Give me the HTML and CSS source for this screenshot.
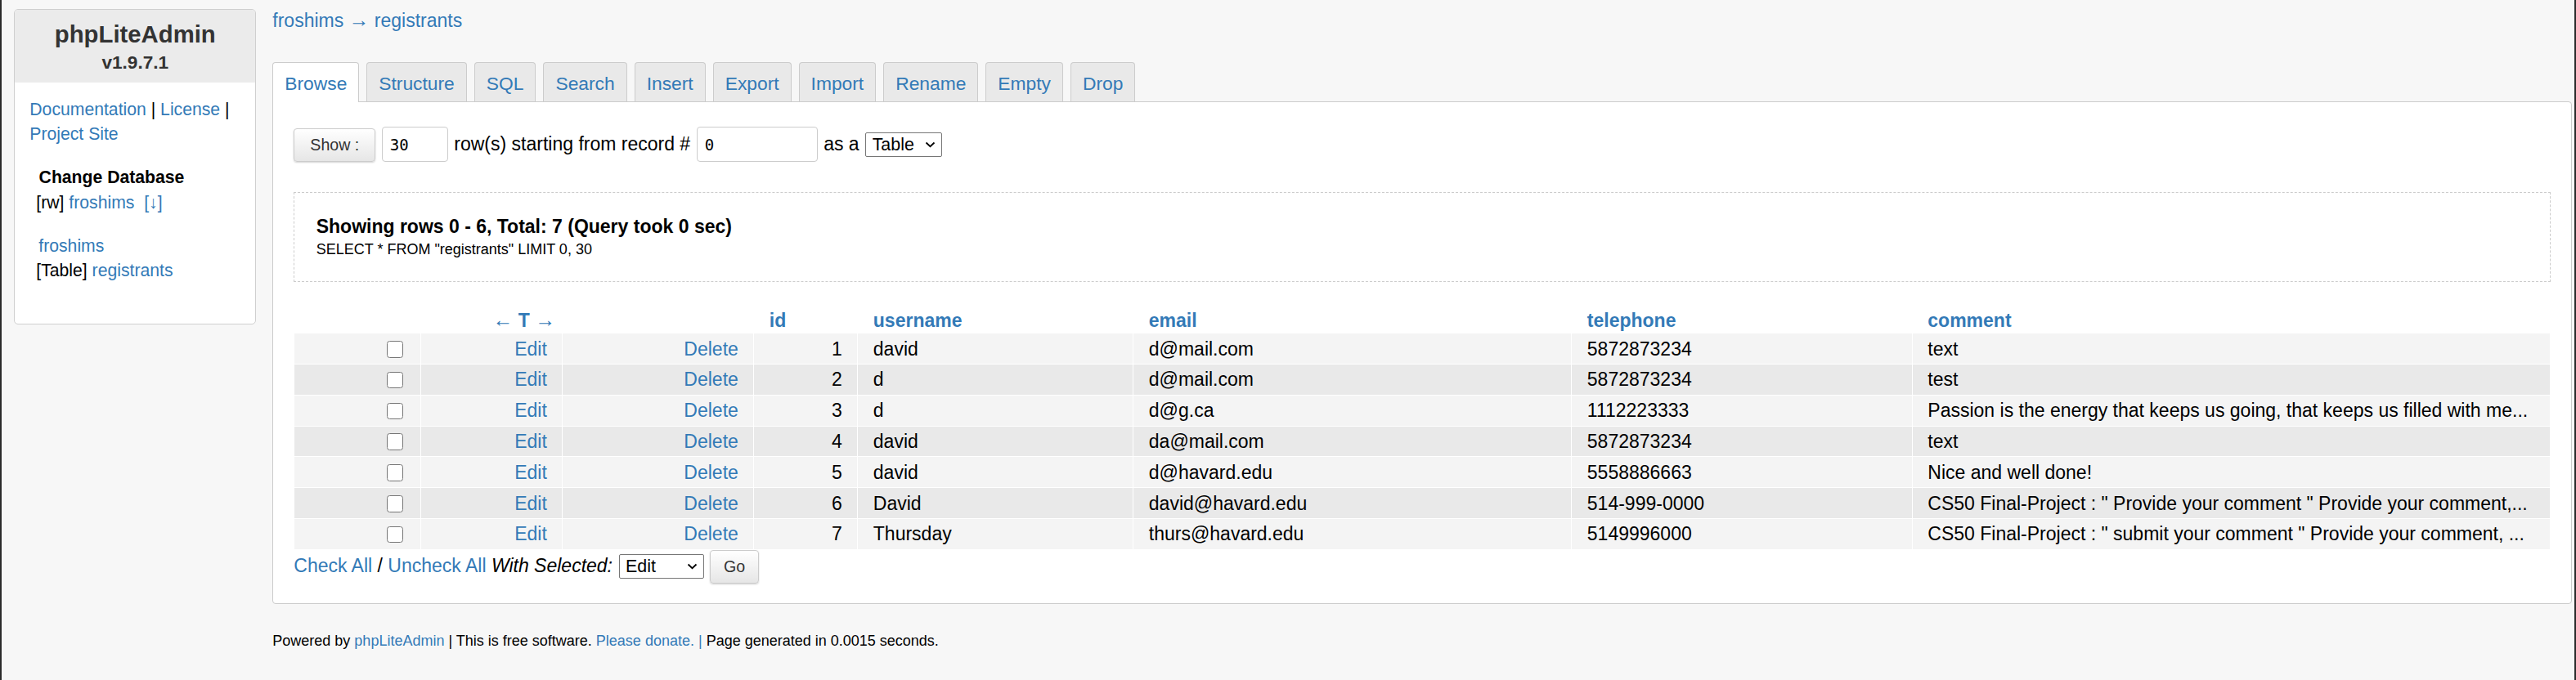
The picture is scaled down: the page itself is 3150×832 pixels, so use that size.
FILE: index.html
```html
<!DOCTYPE html>
<html>
<head>
<meta charset="utf-8">
<title>phpLiteAdmin</title>
<link rel="stylesheet" href="styles.css">
</head>
<body>
<div class="page">
  <aside class="sidebar">
    <div class="sb-head">
      <h1 class="sb-title">phpLiteAdmin</h1>
      <div class="sb-ver">v1.9.7.1</div>
    </div>
    <div class="sb-body">
      <div class="sb-links"><a href="#">Documentation</a> | <a href="#">License</a> | <a href="#">Project Site</a></div>
      <div class="sb-db">
        <div class="sb-label">Change Database</div>
        <div>[rw] <a href="#">froshims</a>&nbsp; <a href="#">[↓]</a></div>
        <div class="sb-dbname"><a href="#">froshims</a></div>
        <div>[Table] <a href="#">registrants</a></div>
      </div>
    </div>
  </aside>
  <main class="main">
    <div class="crumb"><a href="#">froshims</a> <span class="arr">→</span> <a href="#">registrants</a></div>
    <nav class="tabs">
      <a class="tab active" href="#">Browse</a>
      <a class="tab" href="#">Structure</a>
      <a class="tab" href="#">SQL</a>
      <a class="tab" href="#">Search</a>
      <a class="tab" href="#">Insert</a>
      <a class="tab" href="#">Export</a>
      <a class="tab" href="#">Import</a>
      <a class="tab" href="#">Rename</a>
      <a class="tab" href="#">Empty</a>
      <a class="tab" href="#">Drop</a>
    </nav>
    <section class="panel">
      <form class="showrow">
        <button type="button" class="btn btn-show">Show :</button>
        <input class="inp inp-num" type="text" value="30">
        <span>row(s) starting from record #</span>
        <input class="inp inp-start" type="text" value="0">
        <span>as a</span>
        <span class="selwrap">
          <select class="sel sel-view"><option>Table</option><option>Chart</option></select>
          <svg class="chev" width="13" height="8" viewBox="0 0 13 8"><path d="M1.5 1.5 L6.5 6.2 L11.5 1.5" fill="none" stroke="#000" stroke-width="1.8"/></svg>
        </span>
      </form>

      <div class="query">
        <div class="query-title">Showing rows 0 - 6, Total: 7 (Query took 0 sec)</div>
        <div class="query-sql">SELECT * FROM "registrants" LIMIT 0, 30</div>
      </div>

      <table class="data">
        <colgroup>
          <col class="c-chk"><col class="c-edit"><col class="c-del"><col class="c-id"><col class="c-user"><col class="c-mail"><col class="c-tel"><col class="c-com">
        </colgroup>
        <thead>
          <tr>
            <th colspan="3" class="th-center"><a href="#"><span class="arr">←</span> <b>T</b> <span class="arr">→</span></a></th>
            <th><a href="#">id</a></th>
            <th><a href="#">username</a></th>
            <th><a href="#">email</a></th>
            <th><a href="#">telephone</a></th>
            <th><a href="#">comment</a></th>
          </tr>
        </thead>
        <tbody>
          <tr class="odd"><td class="r"><input class="chk" type="checkbox"></td><td class="r"><a href="#">Edit</a></td><td class="r"><a href="#">Delete</a></td><td class="r">1</td><td>david</td><td>d@mail.com</td><td>5872873234</td><td>text</td></tr>
          <tr class="even"><td class="r"><input class="chk" type="checkbox"></td><td class="r"><a href="#">Edit</a></td><td class="r"><a href="#">Delete</a></td><td class="r">2</td><td>d</td><td>d@mail.com</td><td>5872873234</td><td>test</td></tr>
          <tr class="odd"><td class="r"><input class="chk" type="checkbox"></td><td class="r"><a href="#">Edit</a></td><td class="r"><a href="#">Delete</a></td><td class="r">3</td><td>d</td><td>d@g.ca</td><td>1112223333</td><td>Passion is the energy that keeps us going, that keeps us filled with me...</td></tr>
          <tr class="even"><td class="r"><input class="chk" type="checkbox"></td><td class="r"><a href="#">Edit</a></td><td class="r"><a href="#">Delete</a></td><td class="r">4</td><td>david</td><td>da@mail.com</td><td>5872873234</td><td>text</td></tr>
          <tr class="odd"><td class="r"><input class="chk" type="checkbox"></td><td class="r"><a href="#">Edit</a></td><td class="r"><a href="#">Delete</a></td><td class="r">5</td><td>david</td><td>d@havard.edu</td><td>5558886663</td><td>Nice and well done!</td></tr>
          <tr class="even"><td class="r"><input class="chk" type="checkbox"></td><td class="r"><a href="#">Edit</a></td><td class="r"><a href="#">Delete</a></td><td class="r">6</td><td>David</td><td>david@havard.edu</td><td>514-999-0000</td><td>CS50 Final-Project : " Provide your comment " Provide your comment,...</td></tr>
          <tr class="odd"><td class="r"><input class="chk" type="checkbox"></td><td class="r"><a href="#">Edit</a></td><td class="r"><a href="#">Delete</a></td><td class="r">7</td><td>Thursday</td><td>thurs@havard.edu</td><td>5149996000</td><td>CS50 Final-Project : " submit your comment " Provide your comment, ...</td></tr>
        </tbody>
      </table>

      <div class="actions">
        <span><a href="#">Check All</a> / <a href="#">Uncheck All</a> <i>With Selected:</i></span>
        <span class="selwrap">
          <select class="sel sel-act"><option>Edit</option><option>Delete</option></select>
          <svg class="chev" width="13" height="8" viewBox="0 0 13 8"><path d="M1.5 1.5 L6.5 6.2 L11.5 1.5" fill="none" stroke="#000" stroke-width="1.8"/></svg>
        </span>
        <button type="button" class="btn btn-go">Go</button>
      </div>
    </section>
    <footer class="foot">Powered by <a href="#">phpLiteAdmin</a> | This is free software. <a href="#">Please donate. |</a> Page generated in 0.0015 seconds.</footer>
  </main>
</div>
</body>
</html>
```

FILE: styles.css
```css
html {
  margin: 0;
  padding: 0;
  background: #f7f7f7;
}
body {
  margin: 0;
  padding: 0;
  height: 832px;
  overflow: hidden;
  box-sizing: border-box;
  border-left: 2px solid #2b2b2b;
  border-right: 2px solid #2b2b2b;
  background: #f7f7f7;
  font-family: "Liberation Sans", Arial, Helvetica, sans-serif;
  font-size: 23px;
  color: #000;
}
a {
  color: #337ab7;
  text-decoration: none;
}
.arr {
  font-size: 1.08em;
  line-height: 1;
}

.page {
  display: flex;
  align-items: flex-start;
  gap: 20px;
  padding: 10.7px 3px 0 15.3px;
}

/* sidebar */
.sidebar {
  flex: none;
  width: 296px;
  box-sizing: border-box;
  background: #fff;
  border: 1px solid #cfcfcf;
  border-radius: 5px;
  overflow: hidden;
}
.sb-head {
  background: #ebebeb;
  text-align: center;
  color: #333;
  padding: 12.9px 0 10.6px;
}
.sb-title {
  margin: 0;
  font-size: 29.3px;
  line-height: 34px;
  font-weight: bold;
}
.sb-ver {
  margin-top: 5.5px;
  font-size: 22.6px;
  line-height: 26px;
  font-weight: bold;
}
.sb-body {
  padding: 18px 18px 50px;
  font-size: 21.2px;
  line-height: 30.3px;
}
.sb-db {
  margin-top: 23px;
  padding-left: 8px;
}
.sb-label {
  font-weight: bold;
  margin-left: 3.3px;
}
.sb-dbname {
  margin-top: 23px;
  margin-left: 3px;
}

/* main */
.main {
  flex: 1;
  min-width: 0;
}
.crumb {
  margin-top: 1.7px;
  line-height: 26px;
  color: #337ab7;
}
.tabs {
  display: flex;
  align-items: flex-start;
  gap: 9px;
  margin-top: 37.6px;
  margin-bottom: -1px;
  font-size: 22.8px;
}
.tab {
  display: block;
  border: 1px solid #cccccc;
  border-bottom: 0;
  border-radius: 4px 4px 0 0;
  background: #e9e9e9;
  padding: 12px 14px 9px;
  line-height: 26px;
}
.tab.active {
  background: #fff;
  padding-bottom: 10px;
  position: relative;
  z-index: 1;
}
.panel {
  background: #fff;
  border: 1px solid #cccccc;
  border-radius: 0 4px 4px 4px;
  padding: 30.3px 25px 24px;
}

/* controls */
.showrow,
.actions {
  display: flex;
  align-items: baseline;
  gap: 7.5px;
  margin: 0;
}
.btn {
  box-sizing: border-box;
  height: 41px;
  padding: 0;
  font-family: "Liberation Sans", Arial, sans-serif;
  font-size: 19.6px;
  color: #333;
  border: 1px solid #cccccc;
  border-radius: 4px;
  background: linear-gradient(#ffffff, #e6e6e6);
  box-shadow: 0 1px 2px rgba(0, 0, 0, 0.18);
}
.btn-show { width: 100px; }
.btn-go { width: 60px; }
.inp {
  box-sizing: border-box;
  height: 43px;
  border: 1px solid #cccccc;
  border-radius: 4px;
  padding: 0 9px;
  font-family: "DejaVu Sans Mono", "Liberation Mono", monospace;
  font-size: 19px;
  color: #000;
  background: #fff;
}
.inp-num { width: 81px; }
.inp-start { width: 148px; }
.selwrap {
  position: relative;
  display: inline-block;
}
.sel {
  appearance: none;
  -webkit-appearance: none;
  box-sizing: border-box;
  height: 30px;
  border: 1px solid #767676;
  border-radius: 2px;
  padding: 0 0 0 7.5px;
  font-family: "Liberation Sans", Arial, sans-serif;
  font-size: 21.4px;
  color: #000;
  background: #fff;
}
.sel-view { width: 94px; }
.sel-act { width: 104px; }
.chev {
  position: absolute;
  right: 8px;
  top: 11px;
  pointer-events: none;
}

/* query box */
.query {
  margin-top: 37px;
  border: 1px dashed #cccccc;
  padding: 27.8px 26.4px;
}
.query-title {
  font-weight: bold;
  line-height: 26px;
}
.query-sql {
  margin-top: 4.7px;
  font-size: 18px;
  line-height: 21px;
}

/* data table */
.data {
  margin-top: 27.9px;
  width: 100%;
  table-layout: fixed;
  border-collapse: separate;
  border-spacing: 1px;
}
.c-chk { width: 153.7px; }
.c-edit { width: 172.3px; }
.c-del { width: 233px; }
.c-id { width: 126px; }
.c-user { width: 336px; }
.c-mail { width: 535px; }
.c-tel { width: 415.5px; }
.data th {
  padding: 5.4px 18.5px 2.4px;
  line-height: 26px;
  text-align: left;
  font-weight: bold;
  white-space: nowrap;
}
.data th.th-center {
  text-align: center;
  font-weight: normal;
}
.data td {
  padding: 5.4px 18.5px;
  line-height: 26px;
  white-space: nowrap;
  overflow: hidden;
}
.data td.r { text-align: right; }
.data tr.odd td { background: #f4f4f4; }
.data tr.even td { background: #e9e9e9; }
.chk {
  appearance: none;
  -webkit-appearance: none;
  box-sizing: border-box;
  width: 20.4px;
  height: 20.6px;
  margin: 0 2.5px 0 0;
  border: 1px solid #767676;
  border-radius: 3.5px;
  background: #fff;
  vertical-align: -3px;
}

.actions {
  margin-top: 0.7px;
}

.foot {
  margin-top: 35px;
  font-size: 18px;
  line-height: 21px;
}
```
